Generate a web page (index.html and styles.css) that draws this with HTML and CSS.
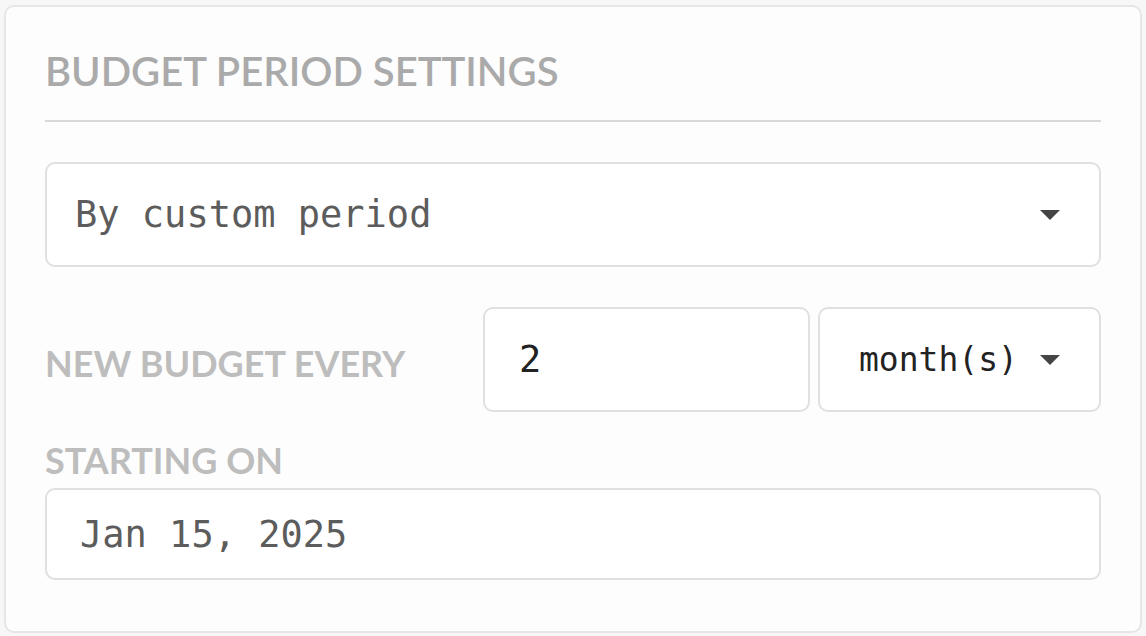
FILE: index.html
```html
<!DOCTYPE html>
<html>
<head>
<meta charset="utf-8">
<link rel="stylesheet" href="styles.css">
</head>
<body>
<div class="card">
  <div class="card-header"><h2 class="title">BUDGET PERIOD SETTINGS</h2></div>
  <div class="field select-wide">
    <span class="value">By custom period</span>
    <span class="caret"></span>
  </div>
  <div class="row">
    <span class="label">NEW BUDGET EVERY</span>
    <div class="field number">2</div>
    <div class="field unit">
      <span class="unit-text">month(s)</span>
      <span class="caret"></span>
    </div>
  </div>
  <div class="label start-label">STARTING ON</div>
  <div class="field date"><span class="value">Jan 15, 2025</span></div>
</div>
</body>
</html>
```

FILE: styles.css
```css
html, body {
  margin: 0;
  padding: 0;
}
body {
  background: #f7f7f8;
  width: 1146px;
  height: 636px;
  overflow: hidden;
}
.card {
  box-sizing: border-box;
  margin: 5px 0 0 4px;
  width: 1138px;
  height: 628px;
  border: 2px solid #e6e6e6;
  border-radius: 10px;
  background: #fdfdfd;
  padding: 0 39px;
}
.card-header {
  padding: 44px 0 29px;
  border-bottom: 2px solid #d9d9d9;
}
.title {
  margin: 0;
  font-family: Lato, "Liberation Sans", sans-serif;
  font-weight: 600;
  font-size: 40px;
  line-height: 40px;
  color: #aaaaaa;
}
.field {
  box-sizing: border-box;
  border: 2px solid #e0e0e0;
  border-radius: 10px;
  background: #ffffff;
  display: flex;
  align-items: center;
  font-family: "DejaVu Sans Mono", monospace;
}
.select-wide {
  margin-top: 40px;
  height: 105px;
  padding: 0 39px 0 28px;
  justify-content: space-between;
}
.value {
  font-size: 37px;
  color: #5c5c5c;
}
.caret {
  width: 0;
  height: 0;
  border-left: 10px solid transparent;
  border-right: 10px solid transparent;
  border-top: 10px solid #444444;
}
.row {
  margin-top: 40px;
  display: flex;
  align-items: center;
  height: 105px;
}
.label {
  font-family: Lato, "Liberation Sans", sans-serif;
  font-weight: 700;
  font-size: 36px;
  color: #bdbdbd;
}
.row .label {
  width: 438px;
  padding-top: 6px;
}
.number {
  width: 327px;
  height: 105px;
  padding-left: 34px;
  font-size: 37px;
  color: #222222;
}
.unit {
  margin-left: 8px;
  flex: 1;
  height: 105px;
  padding: 0 39px 0 39px;
  justify-content: space-between;
}
.unit-text {
  font-size: 33px;
  color: #222222;
}
.start-label {
  margin-top: 28px;
  line-height: 40px;
}
.date {
  margin-top: 8px;
  height: 92px;
  padding-left: 33px;
}
```
